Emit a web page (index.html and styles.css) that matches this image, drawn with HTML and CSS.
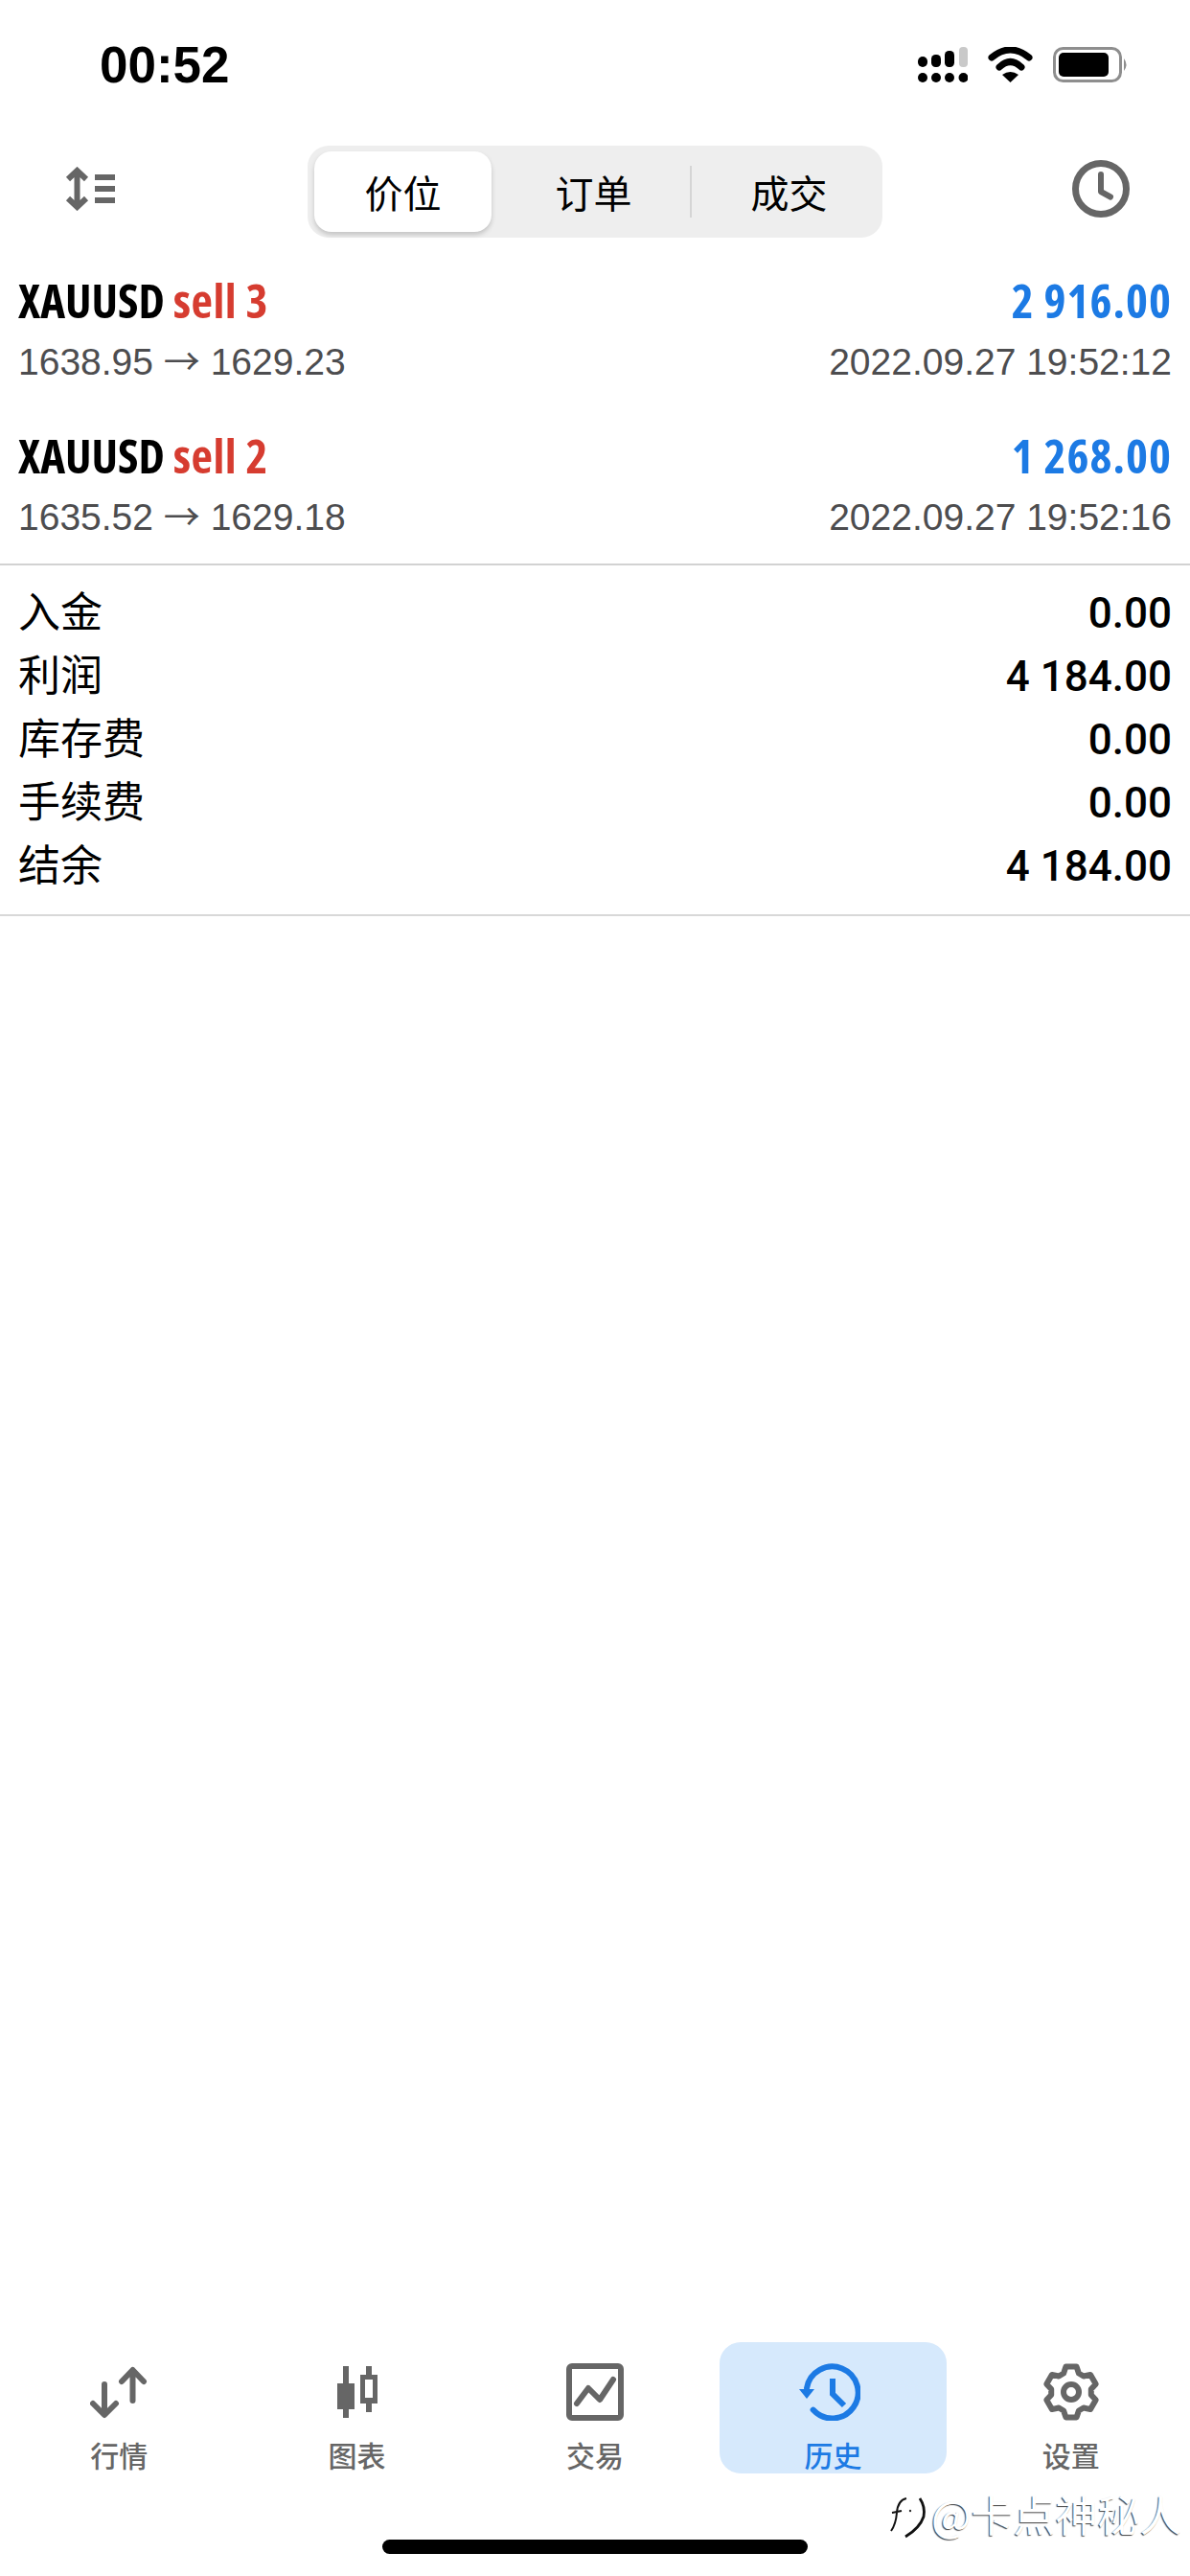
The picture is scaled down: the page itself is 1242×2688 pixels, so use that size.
FILE: index.html
```html
<!DOCTYPE html>
<html lang="zh-CN">
<head>
    <meta charset="UTF-8">
    <meta name="viewport" content="width=device-width, initial-scale=1.0">
    <title>历史</title>
    <link rel="stylesheet" href="styles.css">
</head>
<body>
    <div class="app">
        <header class="status-bar">
            <span class="time">00:52</span>
            <div class="status-icons">
                <svg width="52" height="37" viewBox="0 0 52 37">
                    <rect x="0" y="10" width="10" height="11" rx="5" fill="#000"/>
                    <rect x="14" y="8" width="10" height="13" rx="4.5" fill="#000"/>
                    <rect x="28" y="4" width="10" height="17" rx="4.5" fill="#000"/>
                    <rect x="43" y="0" width="9" height="21" rx="4" fill="#c9c9c9"/>
                    <circle cx="5" cy="32" r="5" fill="#000"/>
                    <circle cx="19" cy="32" r="5" fill="#000"/>
                    <circle cx="33" cy="32" r="5" fill="#000"/>
                    <circle cx="47.5" cy="32" r="5" fill="#000"/>
                </svg>
                <svg width="47" height="37" viewBox="0 0 47 37">
                    <path d="M4 11 Q23.5 -5 43 11" fill="none" stroke="#000" stroke-width="7" stroke-linecap="round"/>
                    <path d="M12 21 Q23.5 10 35 21" fill="none" stroke="#000" stroke-width="7" stroke-linecap="round"/>
                    <path d="M23.5 37 L15 29 Q23.5 23 32 29 Z" fill="#000"/>
                </svg>
                <svg width="79" height="37" viewBox="0 0 79 37">
                    <rect x="1.5" y="1.5" width="69" height="34" rx="9" fill="#fff" stroke="#8e8e8e" stroke-width="3"/>
                    <rect x="6" y="6" width="52" height="25" rx="5" fill="#000"/>
                    <path d="M74 12 Q79 18.5 74 25 Z" fill="#8e8e8e"/>
                </svg>
            </div>
        </header>

        <div class="toolbar">
            <svg class="sort-icon" width="52" height="46" viewBox="0 0 52 46">
                <path d="M3 13 L12.5 4 L22 13 M3 33 L12.5 42 L22 33 M12.5 4 V42" fill="none" stroke="#666" stroke-width="6"/>
                <rect x="31" y="8" width="21" height="6" fill="#666"/>
                <rect x="31" y="20" width="21" height="6" fill="#666"/>
                <rect x="31" y="32" width="21" height="6" fill="#666"/>
            </svg>
            <div class="segments">
                <div class="segment active">价位</div>
                <div class="segment middle">订单</div>
                <div class="segment last">成交</div>
            </div>
            <svg class="clock-icon" width="60" height="60" viewBox="0 0 60 60">
                <circle cx="30" cy="30" r="26.5" fill="none" stroke="#666" stroke-width="7"/>
                <path d="M30 15 V33 L40 38.5" fill="none" stroke="#666" stroke-width="6" stroke-linecap="round" stroke-linejoin="round"/>
            </svg>
        </div>

        <section class="deals">
            <div class="deal">
                <div class="deal-line">
                    <span class="symbol">XAUUSD <span class="side">sell 3</span></span>
                    <span class="profit">2 916.00</span>
                </div>
                <div class="deal-line detail">
                    <span>1638.95 <span class="arrow">→</span> 1629.23</span>
                    <span>2022.09.27 19:52:12</span>
                </div>
            </div>
            <div class="deal">
                <div class="deal-line">
                    <span class="symbol">XAUUSD <span class="side">sell 2</span></span>
                    <span class="profit">1 268.00</span>
                </div>
                <div class="deal-line detail">
                    <span>1635.52 <span class="arrow">→</span> 1629.18</span>
                    <span>2022.09.27 19:52:16</span>
                </div>
            </div>
        </section>

        <section class="summary">
            <div class="summary-row"><span>入金</span><span class="amount">0.00</span></div>
            <div class="summary-row"><span>利润</span><span class="amount">4 184.00</span></div>
            <div class="summary-row"><span>库存费</span><span class="amount">0.00</span></div>
            <div class="summary-row"><span>手续费</span><span class="amount">0.00</span></div>
            <div class="summary-row"><span>结余</span><span class="amount">4 184.00</span></div>
        </section>

        <nav class="tabbar">
            <div class="tab">
                <svg width="60" height="60" viewBox="0 0 60 60">
                    <path d="M15 22 V53 M3 42 L15 54 L27 42" fill="none" stroke="#666" stroke-width="6" stroke-linecap="round" stroke-linejoin="round"/>
                    <path d="M44.5 8 V39 M33 19 L44.5 7 L56 19" fill="none" stroke="#666" stroke-width="6" stroke-linecap="round" stroke-linejoin="round"/>
                </svg>
                <span>行情</span>
            </div>
            <div class="tab">
                <svg width="44" height="60" viewBox="0 0 44 60">
                    <path d="M7 3 H13 V21 H19 V48 H13 V57 H7 V48 H1 V21 H7 Z" fill="#666"/>
                    <path d="M31 3 H37 V12 H43 V42 H37 V51 H31 V42 H25 V12 H31 Z M30 17 V36 H38 V17 Z" fill="#666" fill-rule="evenodd"/>
                </svg>
                <span>图表</span>
            </div>
            <div class="tab">
                <svg width="60" height="60" viewBox="0 0 60 60">
                    <rect x="3" y="3" width="54" height="54" rx="3" fill="none" stroke="#666" stroke-width="6"/>
                    <path d="M11 42 L23 26 L35 38 L49 17" fill="none" stroke="#666" stroke-width="6" stroke-linecap="round" stroke-linejoin="round"/>
                </svg>
                <span>交易</span>
            </div>
            <div class="tab active">
                <svg class="history-icon" width="64" height="60" viewBox="0 0 64 60">
                    <path d="M8 26 A27 27 0 1 1 14.6 48.6" fill="none" stroke="#1c7ae4" stroke-width="6" stroke-linecap="round"/>
                    <path d="M0 27 H16 L8 37 Z" fill="#1c7ae4"/>
                    <path d="M35 16 V32 L47 44" fill="none" stroke="#1c7ae4" stroke-width="6"/>
                </svg>
                <span>历史</span>
            </div>
            <div class="tab">
                <svg width="60" height="60" viewBox="0 0 60 60">
                    <path d="M22.1 10.5 L24.4 3.6 H35.6 L37.9 10.5 L42.9 13.5 L50.1 11.9 L55.7 21.7 L50.8 27.1 V32.9 L55.7 38.3 L50.1 48.1 L42.9 46.5 L37.9 49.5 L35.6 56.4 H24.4 L22.1 49.5 L17.1 46.5 L9.9 48.1 L4.3 38.3 L9.2 32.9 V27.1 L4.3 21.7 L9.9 11.9 L17.1 13.5 Z" fill="none" stroke="#666" stroke-width="6" stroke-linejoin="round"/>
                    <circle cx="30" cy="30" r="8" fill="none" stroke="#666" stroke-width="6"/>
                </svg>
                <span>设置</span>
            </div>
        </nav>

        <div class="home-bar"></div>

        <div class="watermark">
            <svg width="40" height="54" viewBox="0 0 40 54">
                <path d="M18 11 Q9 13 8 26 Q7 38 2 45 M3 26 L13 24" fill="none" stroke="#111" stroke-width="2"/>
                <path d="M32 11 Q38 20 36 30 Q32 42 17 51" fill="none" stroke="#111" stroke-width="2.8"/>
                <circle cx="22" cy="24" r="1.2" fill="#333"/>
            </svg>
            <span>@卡点神秘人</span>
        </div>
    </div>
</body>
</html>
```

FILE: styles.css
```css
* {
    box-sizing: border-box;
}
html, body {
    margin: 0;
    padding: 0;
    background-color: #fff;
}
body {
    font-family: "Liberation Sans", "Noto Sans CJK SC", sans-serif;
    color: #000;
}
svg {
    display: block;
}
.app {
    position: relative;
    width: 1242px;
    height: 2688px;
    display: flex;
    flex-direction: column;
    overflow: hidden;
}

/* status bar */
.status-bar {
    height: 120px;
    padding: 46px 64px 0 104px;
    display: flex;
    justify-content: space-between;
    align-items: flex-start;
}
.time {
    font-size: 53px;
    font-weight: bold;
    line-height: 44px;
}
.status-icons {
    display: flex;
    align-items: center;
    gap: 21px;
    margin-top: 3px;
}

/* toolbar */
.toolbar {
    height: 128px;
    padding: 32px 63px 0 68px;
    display: flex;
    justify-content: space-between;
    align-items: flex-start;
}
.sort-icon {
    margin-top: 22px;
}
.clock-icon {
    margin-top: 15px;
}
.segments {
    width: 600px;
    height: 96px;
    margin-left: 3px;
    padding: 6px 7px;
    background-color: #eeeeee;
    border-radius: 22px;
    display: flex;
    font-family: "Noto Sans CJK SC", sans-serif;
    font-size: 40px;
}
.segment {
    height: 84px;
    display: flex;
    align-items: center;
    justify-content: center;
}
.segment.active {
    width: 185px;
    background-color: #fff;
    border-radius: 18px;
    box-shadow: 0 3px 5px rgba(0, 0, 0, 0.18);
}
.segment.middle {
    width: 207px;
    padding-left: 6px;
}
.segment.last {
    width: 193px;
    height: 54px;
    margin-top: 15px;
    padding-left: 12px;
    border-left: 2px solid #d5d5d5;
}

/* deals list */
.deals {
    padding: 32px 19px 16px;
    border-bottom: 2px solid #d2d2d2;
    display: flex;
    flex-direction: column;
    gap: 32px;
}
.deal-line {
    display: flex;
    justify-content: space-between;
    align-items: center;
}
.symbol, .profit {
    font-family: "Open Sans", "Liberation Sans", sans-serif;
    font-stretch: 75%;
    font-weight: 680;
    font-size: 49px;
    line-height: 66px;
}
.side {
    color: #d63c30;
    letter-spacing: 0.5px;
}
.profit {
    color: #1c7ae4;
    letter-spacing: 1px;
}
.detail {
    font-size: 39px;
    line-height: 64px;
    color: #4d4d4f;
}
.arrow {
    font-family: "Noto Sans CJK SC", sans-serif;
    font-size: 38px;
    line-height: 1;
}

/* totals */
.summary {
    height: 366px;
    padding: 13px 19px 0;
    border-bottom: 2px solid #d8d8d8;
}
.summary-row {
    height: 66px;
    display: flex;
    justify-content: space-between;
    align-items: center;
    font-family: "Noto Sans CJK SC", sans-serif;
    font-size: 44px;
}
.amount {
    margin-top: 7px;
    font-family: Roboto, "Liberation Sans", sans-serif;
    font-weight: 500;
    font-size: 44px;
}

/* bottom tabs */
.tabbar {
    margin-top: auto;
    margin-bottom: 107px;
    display: grid;
    grid-template-columns: repeat(5, 1fr);
    height: 137px;
}
.tab {
    display: flex;
    flex-direction: column;
    align-items: center;
    padding-top: 22px;
    gap: 18px;
    color: #666;
    font-family: "Noto Sans CJK SC", sans-serif;
    font-size: 30px;
    font-weight: 500;
    line-height: 34px;
}
.tab.active {
    margin: 0 6px;
    color: #1c7ae4;
    background-color: #d6e9fc;
    border-radius: 22px;
}
.history-icon {
    margin-right: 7px;
}
.home-bar {
    position: absolute;
    left: 399px;
    top: 2650px;
    width: 444px;
    height: 15px;
    background-color: #000;
    border-radius: 8px;
}

/* watermark sits over the page */
.watermark {
    position: absolute;
    left: 928px;
    top: 2596px;
    display: flex;
    align-items: center;
    gap: 4px;
    font-family: "Noto Sans CJK SC", sans-serif;
    font-size: 44px;
    line-height: 54px;
    white-space: nowrap;
    color: #fff;
    text-shadow: -1px 1px 1px rgba(0, 0, 0, 0.75);
}
```
